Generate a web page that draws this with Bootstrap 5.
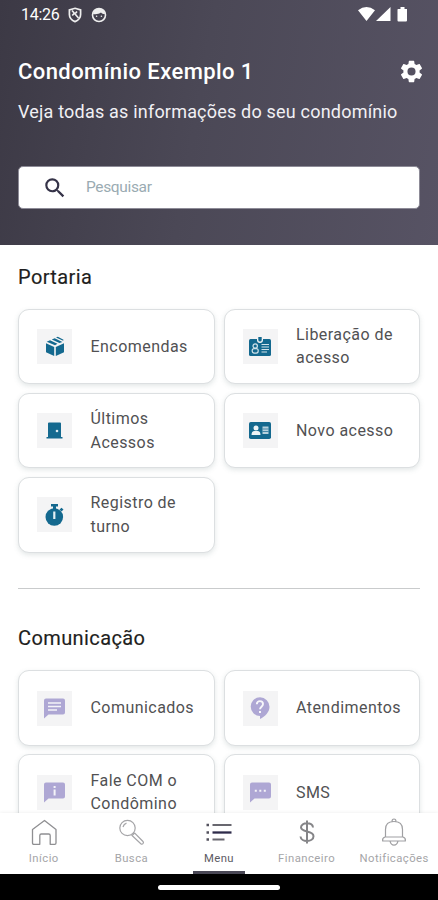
<!DOCTYPE html>
<html lang="pt-BR">
<head>
<meta charset="utf-8">
<meta name="viewport" content="width=device-width, initial-scale=1">
<title>Condomínio Exemplo 1</title>
<link href="https://cdn.jsdelivr.net/npm/bootstrap@5.3.0/dist/css/bootstrap.min.css" rel="stylesheet">
<style>
body{font-family:Roboto,"Liberation Sans",sans-serif;color:#1e1e20;background:#fff}
svg{display:block;flex-shrink:0}
.screen{height:900px;width:438px}
.hero{height:245px;padding:0 18px;color:#fff;background:linear-gradient(100deg,#3c3945 0%,#4b4856 45%,#575364 100%)}
.status{height:29px;font-size:16px;letter-spacing:-.25px;padding:0 13px 0 3px}
.hero-title{font-size:22px;font-weight:500;line-height:28px;letter-spacing:.42px;padding-top:1px}
.hero-sub{font-size:18px;line-height:24px;letter-spacing:.2px;color:#f1f0f4;margin-top:14px}
.search{height:43px;margin-top:42px;padding-left:23px;border:1px solid #8d8b97;border-radius:5px}
.search input{font-size:15.5px;color:#90a4ae;margin-left:18px;padding:0;letter-spacing:-.35px}
.search input::placeholder{color:#9aabb2;opacity:1}
.sections{padding:19.5px 18px 0}
.heading{font-size:20px;font-weight:400;line-height:24px;letter-spacing:.4px;-webkit-text-stroke:.15px #1e1e20}
.tiles{display:grid;grid-template-columns:1fr 1fr;gap:8.4px 9px;margin-top:20px}
.tile{height:75.8px;border:1.5px solid #dcdfe1;border-radius:11px;padding-left:18px;box-shadow:0 2px 5px rgba(90,110,110,.17);font-size:16px;line-height:23.5px;letter-spacing:.45px;color:#515153}
.tile-icon{width:35px;height:35px;background:#f4f4f5;margin-right:18.5px;flex-shrink:0;color:#14698f}
.lilac .tile-icon{color:#aea7d4}
.divider{height:1px;background:#c9cbcc;margin-top:35px}
.tabs{height:61px;box-shadow:0 -1px 3px rgba(0,0,0,.05);z-index:1}
.tab{width:87.6px;font-size:11.3px;line-height:14px;letter-spacing:.45px;color:#a5a5a8;padding-top:4px}
.tab.current{color:#5c5b63}
.tab svg{margin-bottom:5px}
.tab-mark{width:52px;height:3.5px;background:#494755}
.home-strip{height:26px}
.home-handle{width:122px;height:5px}
</style>
</head>
<body>
<div class="screen d-flex flex-column overflow-hidden">
  <header class="hero flex-shrink-0">
    <div class="status d-flex align-items-center">
      <span>14:26</span>
      <svg class="ms-2" width="14" height="16" viewBox="0 0 14 16" fill="none" stroke="#eee" stroke-width="1.7"><path d="M7 1.3 12.6 3v4.5c0 3.3-2.2 5.7-5.6 7.1C3.600 13.200 1.400 10.800 1.400 7.500V3z"/><path d="M4 3.500 10.500 11M6 6.500 4.300 8.500M9 4.500 7.500 6.300"/></svg>
      <svg style="margin-left:9.500px" width="16" height="16" viewBox="0 0 16 16"><circle cx="8" cy="8" r="6.500" fill="none" stroke="#eee" stroke-width="1.600"/><path d="M2 7c1-4 3-5.200 6-5.200S13 3 14 7c-2 0-3-.5-4-1.500C8 7 5 7.500 2 7z" fill="#eee"/><circle cx="5.600" cy="9.200" r=".8" fill="#eee"/><circle cx="10.400" cy="9.200" r=".8" fill="#eee"/></svg>
      <svg class="ms-auto" width="50" height="17" viewBox="0 0 50 17" fill="#fff"><path d="M1 4.200Q9.500-2.200 18 4.200L9.500 15zM33.500 1v14H19zM41 3h2.500V1h4v2H50v11.500q0 1-1 1h-7.500q-1 0-1-1V4q0-1 .5-1z"/></svg>
    </div>
    <div class="d-flex align-items-center justify-content-between pt-1 mt-4">
      <h1 class="hero-title mb-0">Condomínio Exemplo 1</h1>
      <svg style="margin-right:-5px" width="27" height="27" viewBox="0 0 24 24" fill="#fff"><path d="M19.140 12.940c.04-.3.060-.61.060-.94s-.02-.64-.07-.94l2.030-1.580c.18-.14.230-.41.120-.61l-1.920-3.320c-.12-.22-.37-.29-.59-.22l-2.390.96c-.5-.38-1.030-.7-1.620-.94l-.36-2.540c-.04-.24-.24-.41-.48-.41h-3.840c-.24 0-.43.17-.47.41l-.36 2.540c-.59.24-1.130.57-1.620.94l-2.390-.96c-.22-.08-.47 0-.59.22L2.740 8.870c-.12.21-.08.470.120.610l2.030 1.580c-.05.3-.09.630-.09.94s.02.640.070.940l-2.030 1.580c-.18.14-.23.410-.12.610l1.920 3.320c.12.220.370.290.590.220l2.390-.96c.5.380 1.030.7 1.620.940l.36 2.540c.05.240.24.410.480.410h3.840c.24 0 .44-.17.470-.41l.36-2.540c.59-.24 1.130-.56 1.620-.94l2.390.960c.22.080.470 0 .590-.22l1.920-3.320c.12-.22.070-.47-.12-.61zM12 15.600A3.600 3.600 0 1 1 12 8.400a3.600 3.600 0 0 1 0 7.200z"/></svg>
    </div>
    <div class="hero-sub text-nowrap">Veja todas as informações do seu condomínio</div>
    <label class="search bg-white d-flex align-items-center">
      <svg width="26" height="26" viewBox="0 0 24 24" fill="#353348"><path d="M15.500 14h-.79l-.28-.27A6.470 6.470 0 0 0 16 9.500 6.500 6.500 0 1 0 9.500 16c1.610 0 3.090-.59 4.230-1.570l.27.280v.79l5 4.990L20.490 19zm-6 0a4.500 4.500 0 1 1 0-9 4.500 4.500 0 0 1 0 9z"/></svg>
      <input class="form-control border-0 shadow-none bg-transparent" type="text" placeholder="Pesquisar">
    </label>
  </header>

  <main class="sections flex-grow-1 overflow-hidden">
    <h2 class="heading mb-0">Portaria</h2>
    <section class="tiles">
      <div class="tile d-flex align-items-center bg-white">
        <span class="tile-icon d-flex align-items-center justify-content-center"><svg width="20" height="21" viewBox="0 0 20 21" fill="currentColor"><path d="M1 7.200 9.200 11v9L1 16.200zM19 7.200 10.800 11v9L19 16.200zM1.700 5.700 5 4.300l7.500 3.500L10 9.200zM6.800 3.500 9.700 2.200l7.700 3.700-3 1.200zM11 1.600l1.800-.8 5.700 3-.3 1z"/></svg></span><span>Encomendas</span></div>
      <div class="tile d-flex align-items-center bg-white">
        <span class="tile-icon d-flex align-items-center justify-content-center"><svg width="22" height="19" viewBox="0 0 22 19"><rect y="2" width="22" height="17" rx="1.500" fill="currentColor"/><path d="M8 0h6v3q0 3-3 3T8 3z" fill="#f4f4f5"/><path d="M9.300 0h3.400v3q0 1.500-1.700 1.500T9.300 3z" fill="currentColor"/><g fill="none" stroke="#d2e3ea" stroke-width="1.200"><circle cx="6.200" cy="9" r="2.200"/><rect x="3.200" y="11.600" width="6" height="4.500" rx="2"/><path d="M12.500 7.500H20M12.500 10H20M12.500 12.500H20M12.500 15H18"/></g></svg></span><span>Liberação de<br>acesso</span></div>
      <div class="tile d-flex align-items-center bg-white">
        <span class="tile-icon d-flex align-items-center justify-content-center"><svg width="17" height="17" viewBox="0 0 17 17" fill="currentColor"><path d="M2 1.500Q2 .5 3 .5h11q1 0 1 1V15h1.500v1.500H.5V15H2z"/><circle cx="11" cy="9" r="1.300" fill="#dceaf0"/></svg></span><span>Últimos<br>Acessos</span></div>
      <div class="tile d-flex align-items-center bg-white">
        <span class="tile-icon d-flex align-items-center justify-content-center"><svg width="22" height="17" viewBox="0 0 22 17"><rect width="22" height="17" rx="1.800" fill="currentColor"/><g fill="#edf4f7"><circle cx="7" cy="6" r="2.500"/><path d="M2.500 13q0-4 3-4h3q3 0 3 4z"/><path d="M13.500 4.500h6V12h-6z" opacity=".75"/></g><path d="M13.500 7h6M13.500 9.500h6" stroke="currentColor" stroke-width=".7"/></svg></span><span>Novo acesso</span></div>
      <div class="tile d-flex align-items-center bg-white">
        <span class="tile-icon d-flex align-items-center justify-content-center"><svg width="19" height="22" viewBox="0 0 19 22" fill="currentColor"><path d="M6 0h7v2.500h-2V5H8V2.500H6zM14.500 5.500l2-1.700L18.500 5.500 16.500 7.500z"/><circle cx="9.300" cy="13" r="8.800"/><path d="M8.200 7.500h2.200v7.500H8.200z" fill="#e4f0f4"/></svg></span><span>Registro de<br>turno</span></div>
    </section>
    <div class="divider"></div>
    <h2 class="heading mb-0" style="margin-top:37.500px">Comunicação</h2>
    <section class="tiles lilac">
      <div class="tile d-flex align-items-center bg-white">
        <span class="tile-icon d-flex align-items-center justify-content-center"><svg width="21" height="21" viewBox="0 0 21 21"><path d="M2 .5h17q2 0 2 2v12q0 2-2 2H4.500L0 20.500v-18q0-2 2-2z" fill="currentColor"/><path d="M4 5h13M4 8.500h13M4 12h9" stroke="#f4f4f8" stroke-width="1.700"/></svg></span><span>Comunicados</span></div>
      <div class="tile d-flex align-items-center bg-white">
        <span class="tile-icon d-flex align-items-center justify-content-center"><svg width="20" height="22" viewBox="0 0 20 22"><path d="M10 .3a9.300 9.300 0 0 0 0 18.600V22c5-2.500 9.500-7 9.500-12A9.500 9.500 0 0 0 10 .3z" fill="currentColor"/><path d="M6.800 7.300C6.800 3 13 3.300 13 7c0 2.600-3 2.800-3 5.300" fill="none" stroke="#f7f7fa" stroke-width="1.900"/><path d="M9 14h2v2H9z" fill="#f7f7fa"/></svg></span><span>Atendimentos</span></div>
      <div class="tile d-flex align-items-center bg-white">
        <span class="tile-icon d-flex align-items-center justify-content-center"><svg width="21" height="21" viewBox="0 0 21 21"><path d="M2 .5h17q2 0 2 2v12q0 2-2 2H4.500L0 20.500v-18q0-2 2-2z" fill="currentColor"/><path d="M9.600 4h2v2h-2zM9.600 7.500h2v6h-2z" fill="#f4f4f8"/></svg></span><span>Fale COM o<br>Condômino</span></div>
      <div class="tile d-flex align-items-center bg-white">
        <span class="tile-icon d-flex align-items-center justify-content-center"><svg width="21" height="21" viewBox="0 0 21 21"><path d="M2 .5h17q2 0 2 2v12q0 2-2 2H4.500L0 20.500v-18q0-2 2-2z" fill="currentColor"/><path d="M4.800 7.700h2v2h-2zM9.300 7.700h2v2h-2zM13.800 7.700h2v2h-2z" fill="#f4f4f8"/></svg></span><span>SMS</span></div>
    </section>
  </main>

  <nav class="tabs d-flex bg-white flex-shrink-0 position-relative">
    <div class="tab d-flex flex-column align-items-center"><svg width="28" height="30" viewBox="0 0 28 30" fill="none" stroke="#8f8f92" stroke-width="1.300"><path d="M2.500 12.500 14.500 3.500l11.500 9V26q0 1.300-1.300 1.300h-4.500V18.500q0-1.500-1.500-1.500h-7.400Q9.800 17 9.800 18.500v8.800h-6Q2.500 27.300 2.500 26z" stroke-linejoin="round"/></svg>Início</div>
    <div class="tab d-flex flex-column align-items-center"><svg width="28" height="30" viewBox="0 0 28 30" fill="none" stroke="#a5a5a8" stroke-width="1.200"><circle cx="10.500" cy="11" r="7.700"/><path d="M6 10q.8-3 3.500-3.800M15 18.500l2.700-2.500 8.300 8.500q1 1.200 0 2.200t-2.200 0zM16.100 15.700l1 1"/></svg>Busca</div>
    <div class="tab current d-flex flex-column align-items-center justify-content-between border-0"><div class="d-flex flex-column align-items-center"><svg width="28" height="30" viewBox="0 0 28 30" stroke-width="2"><path d="M7.500 8h19M7.500 22.500h12" stroke="#68676f"/><path d="M7.500 15.500h19" stroke="#2e2b4a" stroke-width="2.300"/><path d="M1.500 8H4M1.500 15.500H4M1.500 22.500H4" stroke="#54525e" stroke-width="2.300"/></svg>Menu</div><span class="tab-mark"></span></div>
    <div class="tab d-flex flex-column align-items-center"><svg width="28" height="30" viewBox="0 0 28 30" fill="none" stroke="#858588" stroke-width="2"><path d="M20 10.500C19.500 5 8 5 8 10.300c0 5.700 12.500 2.700 12.500 8.900C20.500 25.500 8 25.500 7.500 19.500M14 3.500v23"/></svg>Financeiro</div>
    <div class="tab d-flex flex-column align-items-center"><svg width="28" height="30" viewBox="0 0 28 30" fill="none" stroke="#a0a0a3" stroke-width="1.200"><path d="M5.500 19.500V12.500q0-8 8.500-8t8.500 8v7M5 20h18q3 1.200 2.300 4H2.700Q2 21.200 5 20zM12 4.500q0-2.500 2-2.500T16 4.500M10 24.200q1 4 4 4t4-4"/></svg>Notificações</div>
  </nav>
  <div class="home-strip bg-black flex-shrink-0 d-flex justify-content-center align-items-center"><span class="home-handle bg-white rounded-pill"></span></div>
</div>
<script src="https://cdn.jsdelivr.net/npm/bootstrap@5.3.0/dist/js/bootstrap.bundle.min.js"></script>
</body>
</html>
